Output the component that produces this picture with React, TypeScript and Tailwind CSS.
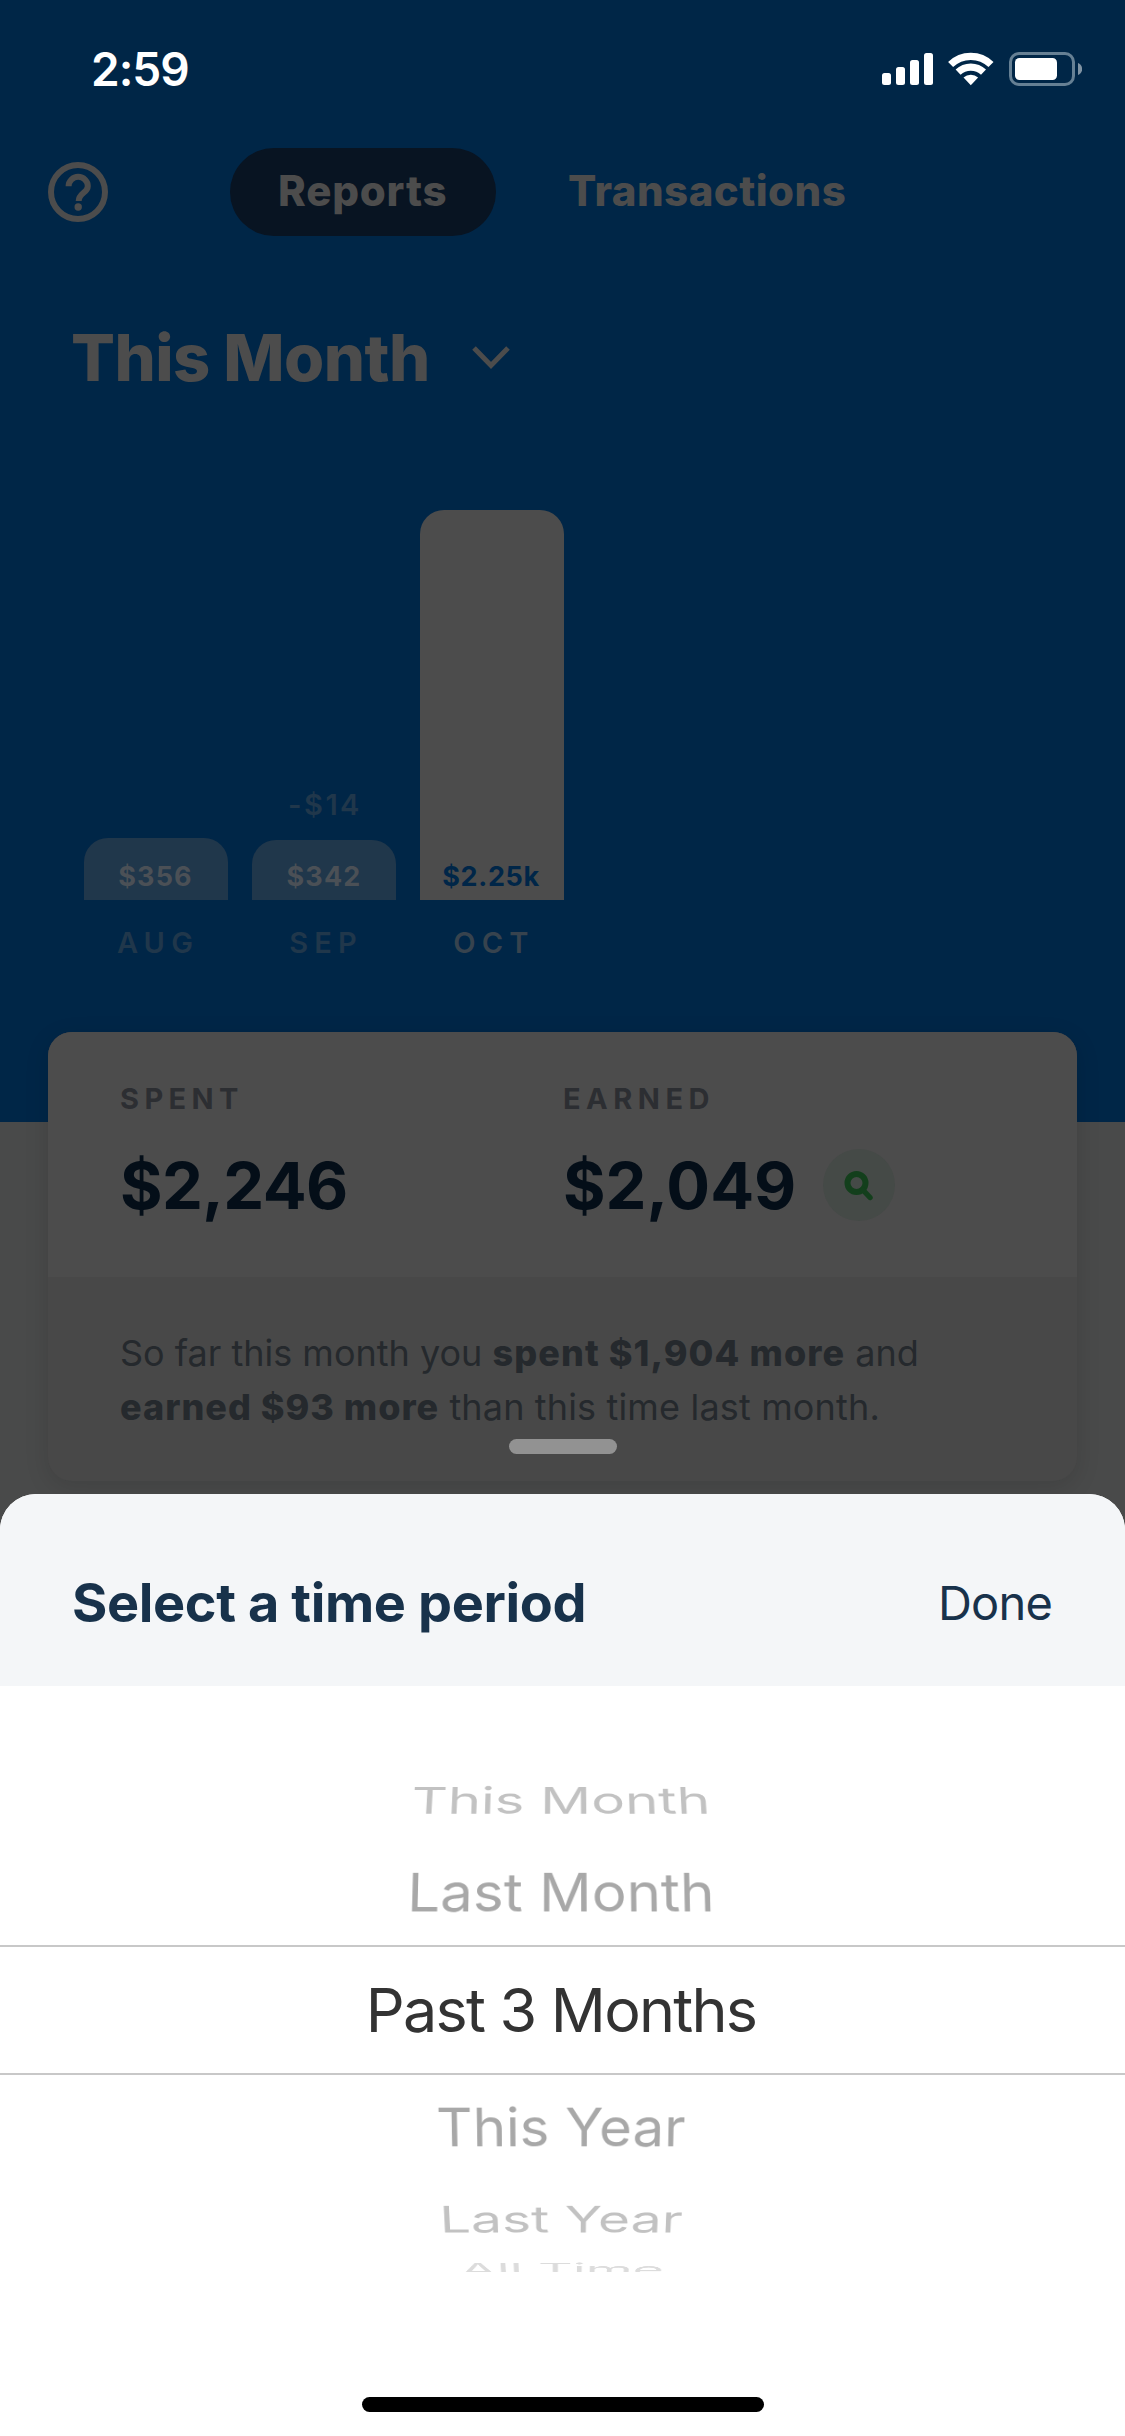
type Month = {
  name: string;
  value: string;
  change?: string;
  bar: string;
  label: string;
};

const months: Month[] = [
  {
    name: "AUG",
    value: "$356",
    bar: "h-[62px] bg-[#20374b] pr-[1px] text-[#4b5056] tracking-[1.2px]",
    label: "text-[#20374b]",
  },
  {
    name: "SEP",
    value: "$342",
    change: "-$14",
    bar: "h-[60px] bg-[#20374b] text-[#4b5056] tracking-[1.2px]",
    label: "text-[#20374b]",
  },
  {
    name: "OCT",
    value: "$2.25k",
    bar: "h-[390px] bg-[#4c4c4c] pr-[2px] text-[#002648] tracking-[0.65px]",
    label: "text-[#37434e]",
  },
];

function StatusIcons() {
  return (
    <svg width="200" height="34" viewBox="0 0 200 34" fill="none">
      <g fill="#fff">
        <rect x="0" y="21" width="9" height="12" rx="2.5" />
        <rect x="14" y="15" width="9" height="18" rx="2.5" />
        <rect x="28" y="8" width="9" height="25" rx="2.5" />
        <rect x="42" y="1" width="9" height="32" rx="2.5" />
        <path d="M88.8 33.2 81.5 25.6A10.5 10.5 0 0 1 96.1 25.6Z" />
      </g>
      <g stroke="#fff" strokeWidth="7.2">
        <path d="M68.6 12.5A29 29 0 0 1 109 12.5" />
        <path d="M76.1 20.2A18.3 18.3 0 0 1 101.5 20.2" />
      </g>
      <rect x="128.5" y="1.5" width="63" height="31" rx="8.5" stroke="#668094" strokeWidth="3" />
      <rect x="133" y="6" width="42" height="22" rx="4.5" fill="#fff" />
      <path d="M196 11c2.6 1 4.2 3.3 4.2 6s-1.6 5-4.2 6z" fill="#8093a3" />
    </svg>
  );
}

function HelpIcon() {
  return (
    <svg width="60" height="60" viewBox="0 0 60 60" fill="none" stroke="#4c4c4c" strokeWidth="6">
      <circle cx="30" cy="30" r="27" />
      <path d="M20.600 24.200a9.600 9.400 0 0 1 19.200 0c0 6.600-9.100 6.800-9.100 14.800" />
      <circle cx="30.200" cy="45" r="3.700" fill="#4c4c4c" stroke="none" />
    </svg>
  );
}

function SearchBadge() {
  return (
    <span className="flex size-[72px] items-center justify-center rounded-full bg-[#454a47]">
      <svg width="72" height="72" viewBox="0 0 72 72" fill="none" stroke="#133f1c">
        <circle cx="33.500" cy="34" r="9" strokeWidth="6" />
        <path d="M39.500 40.500 47 48.500" strokeWidth="5.400" strokeLinecap="round" />
      </svg>
    </span>
  );
}

export default function App() {
  return (
    <div className="relative h-[2436px] w-[1125px] overflow-hidden bg-[#494a4a] font-['Inter',sans-serif]">
      <header className="h-[1122px] bg-[#002647]">
        <div className="flex h-[148px] items-start justify-between pt-[46px] pr-[43px] pl-[91px]">
          <span className="text-[46px] leading-[46px] font-semibold tracking-[-1px] text-white">2:59</span>
          <span className="mt-[6px]">
            <StatusIcons />
          </span>
        </div>

        <nav className="flex h-[88px] items-center pl-[48px] text-[42px] leading-[42px] font-extrabold text-[#4c4c4c]">
          <HelpIcon />
          <span className="ml-[122px] flex h-[88px] w-[266px] items-center rounded-full bg-[#081422] pb-[2px] pl-[48px] tracking-[0.8px]">
            Reports
          </span>
          <span className="ml-[72px] pb-[2px] tracking-[0.46px]">Transactions</span>
        </nav>

        <div className="mt-[85px] flex h-[73px] items-center pl-[71px]">
          <h1 className="w-[401px] text-[65px] leading-[65px] font-extrabold tracking-[-0.57px] whitespace-nowrap text-[#4c4c4c]">
            This Month
          </h1>
          <svg width="39" height="24" viewBox="0 0 39 24" fill="none" stroke="#4c4c4c" strokeWidth="5">
            <path d="M2 2 19 19.500 36 2" />
          </svg>
        </div>

        <div className="flex h-[506px] items-end gap-6 pl-[84px]">
          {months.map((m) => (
            <div key={m.name} className="flex w-36 flex-col items-center">
              {m.change && (
                <span className="mb-[21px] pl-[2px] text-[29px] leading-[29px] font-semibold tracking-[2.46px] text-[#20374b]">
                  {m.change}
                </span>
              )}
              <div
                className={`flex w-full items-end justify-center rounded-t-[24px] pb-[10px] text-[27px] leading-[27px] font-bold ${m.bar}`}
              >
                {m.value}
              </div>
            </div>
          ))}
        </div>
        <div className="mt-[28px] flex gap-6 pl-[84px]">
          {months.map((m) => (
            <span
              key={m.name}
              className={`w-36 pl-[4px] text-center text-[29px] leading-[29px] font-semibold tracking-[6.2px] ${m.label}`}
            >
              {m.name}
            </span>
          ))}
        </div>
      </header>

      <section className="relative mx-12 -mt-[90px] h-[449px] overflow-hidden rounded-[24px] bg-[#484848] shadow-[0_6px_24px_rgba(0,0,0,0.12)]">
        <div className="flex h-[245px] bg-[#4c4c4c] pt-[52px] pl-[72px]">
          <div className="w-[443px]">
            <div className="text-[29px] leading-[29px] font-bold tracking-[5.4px] text-[#2c2e32]">SPENT</div>
            <div className="mt-[36px] flex h-[72px] items-center text-[65px] leading-[65px] font-bold tracking-[-0.62px] text-[#040e18]">
              $2,246
            </div>
          </div>
          <div>
            <div className="text-[29px] leading-[29px] font-bold tracking-[5.5px] text-[#2c2e32]">EARNED</div>
            <div className="mt-[36px] flex h-[72px] items-center">
              <span className="w-[260px] text-[65px] leading-[65px] font-bold text-[#040e18]">$2,049</span>
              <SearchBadge />
            </div>
          </div>
        </div>
        <p className="pt-[49px] pl-[72px] text-[36px] leading-[54px] whitespace-nowrap text-[#25292d]">
          So far this month you{" "}
          <b className="font-extrabold tracking-[1.08px]">spent $1,904 more</b> and
          <br />
          <b className="font-extrabold tracking-[1px]">earned $93 more</b>{" "}
          <span className="tracking-[0.16px]">than this time last month.</span>
        </p>
      </section>

      <div className="absolute inset-x-0 bottom-0 flex h-[997px] flex-col">
        <div className="h-[15px] w-[108px] self-center rounded-full bg-[#929292]" />
        <div className="mt-[40px] flex h-[942px] flex-col overflow-hidden rounded-t-[36px] bg-white">
          <div className="flex h-[192px] items-center justify-between bg-[#f4f6f8] pt-[26px] pr-[73px] pl-[72px] text-[#18324b]">
            <h2 className="text-[54px] leading-[54px] font-bold tracking-[-0.39px]">Select a time period</h2>
            <button className="text-[47px] leading-[48px] tracking-[-0.8px]">Done</button>
          </div>

          <div className="flex flex-col pt-[71px] text-center text-[61px] leading-[61px] whitespace-nowrap">
            <div className="flex h-[87px] items-center justify-center pr-[3px] text-[#c2c2c2]">
              <span className="[transform:perspective(3000px)_rotateX(52.5deg)_scaleX(0.924)]">This Month</span>
            </div>
            <div className="mb-[5px] flex h-[96px] items-center justify-center pr-[3px] text-[#a8a8a8]">
              <span className="[transform:perspective(3000px)_rotateX(28.5deg)_scaleX(0.954)]">Last Month</span>
            </div>
            <div className="flex h-[130px] items-center justify-center border-y-2 border-[#c8c8c8] pr-[3px] tracking-[-1.76px] text-[#333333]">
              Past 3 Months
            </div>
            <div className="mt-[3px] flex h-[98px] items-center justify-center pr-[3px] text-[#a8a8a8]">
              <span className="[transform:perspective(3000px)_rotateX(-28.5deg)_scaleX(0.924)]">This Year</span>
            </div>
            <div className="flex h-[86px] items-center justify-center pr-[3px] text-[#c2c2c2]">
              <span className="[transform:perspective(3000px)_rotateX(-52.5deg)_scaleX(0.906)]">Last Year</span>
            </div>
            <div className="h-[10px] overflow-hidden text-[#dcdcdc]">
              <div className="flex h-[15px] items-center justify-center pr-[2px]">
                <span className="[transform:perspective(3000px)_rotateX(-73deg)_scaleX(0.88)]">All Time</span>
              </div>
            </div>
          </div>

          <div className="mt-[125px] h-[15px] w-[402px] self-center rounded-full bg-black" />
        </div>
      </div>
    </div>
  );
}
